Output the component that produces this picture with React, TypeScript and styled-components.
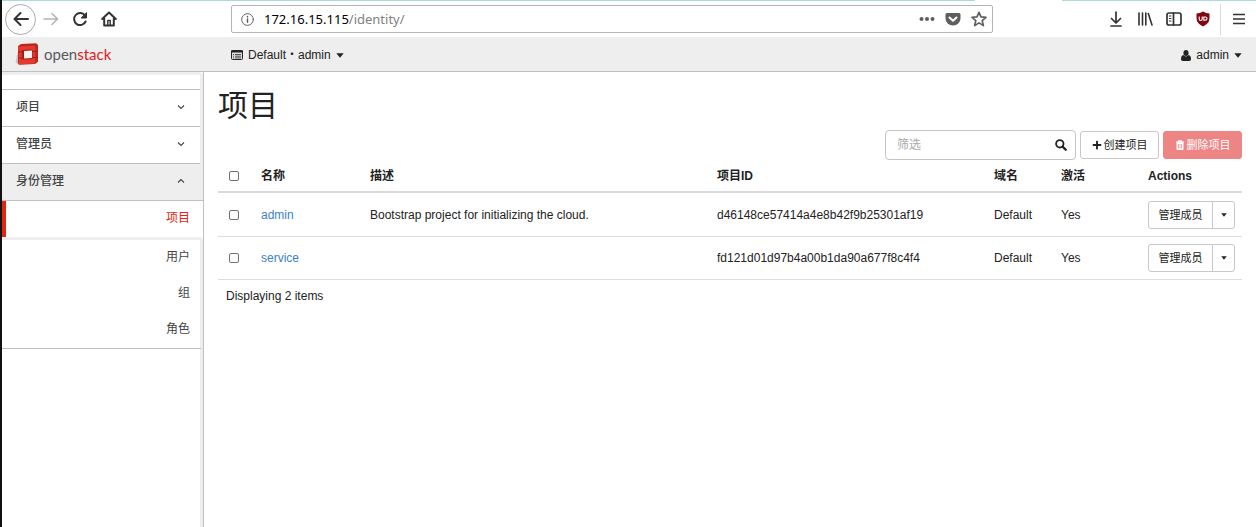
import React from "react";
import styled, { createGlobalStyle, css } from "styled-components";
import { FaPlus } from "react-icons/fa";

const sans = '"Liberation Sans", Arial, "Noto Sans CJK SC", sans-serif';
const line = "#c0c0c0";

const GlobalStyle = createGlobalStyle`
  *, *::before, *::after { box-sizing: border-box; }
  body {
    margin: 0;
    background: #fff;
    color: #222;
    font: 12px/18px ${sans};
  }
  svg { display: block; flex: none; }
  button, input { font: inherit; color: inherit; }
  a { text-decoration: none; }
`;

const Page = styled.div`
  display: flex;
  flex-direction: column;
  min-height: 100vh;
  border-left: 2px solid #111;
`;

const TabEdge = styled.div`
  display: flex;
  justify-content: space-between;
  height: 1px;
`;

const EdgeLine = styled.span<{ $width: string }>`
  width: ${(p) => p.$width};
  background: #abd9d8;
`;

const BrowserBar = styled.div`
  display: flex;
  align-items: center;
  height: 36px;
  color: #333;
`;

const NavGroup = styled.div`
  display: flex;
  align-items: center;
  flex: none;
  width: 229px;
  padding-left: 3px;
`;

const ToolButton = styled.button<{ $round?: boolean; $faded?: boolean }>`
  display: flex;
  align-items: center;
  justify-content: center;
  width: 29px;
  height: 30px;
  padding: 0;
  border: 0;
  background: none;
  color: ${(p) => (p.$faded ? "#b4b4b4" : "#333")};
  ${(p) =>
    p.$round &&
    css`
      width: 31px;
      height: 31px;
      border: 1px solid #aaa;
      border-radius: 50%;
    `}
`;

const AddressBar = styled.div`
  display: flex;
  align-items: center;
  flex: 1;
  gap: 10px;
  height: 28px;
  padding: 0 5px 0 9px;
  border: 1px solid #b5b5b5;
  border-radius: 2px;
  color: #5e5e5e;
`;

const Address = styled.div`
  flex: 1;
  font: 13px/20px "Noto Sans", "Open Sans", sans-serif;
  color: #808080;
  white-space: nowrap;

  b {
    font-weight: 400;
    color: #000;
  }
`;

const AddressTools = styled.div`
  display: flex;
  align-items: center;
  gap: 10px;
`;

const ToolGroup = styled.div`
  display: flex;
  align-items: center;
  justify-content: flex-end;
  flex: none;
  width: 263px;
  padding-right: 3px;
`;

const Divider = styled.span`
  width: 1px;
  height: 31px;
  margin: 0 3px;
  background: #d9d6e8;
`;

const Header = styled.header`
  display: flex;
  align-items: center;
  height: 35px;
  padding: 0 14px 0 13px;
  background: #eee;
  border-bottom: 1px solid ${line};
`;

const Brand = styled.a`
  display: flex;
  align-items: center;
  gap: 5px;
  width: 216px;
  font: 15px/24px Lato, sans-serif;
  color: #58585b;

  span { color: #e02020; }
`;

const MenuButton = styled.button<{ $end?: boolean }>`
  display: flex;
  align-items: center;
  gap: 5px;
  padding: 2px 0 0;
  margin-left: ${(p) => (p.$end ? "auto" : "0")};
  border: 0;
  background: none;
`;

const Body = styled.div`
  display: flex;
  flex: 1;
`;

const Sidebar = styled.nav`
  display: flex;
  flex-direction: column;
  flex: none;
  width: 202px;
  border-right: 1px solid ${line};
  color: #444;
`;

const Inset = styled.div<{ $topEdge?: boolean }>`
  flex: none;
  border-right: 3px solid #eee;
  border-top: ${(p) => (p.$topEdge ? "3px solid #eee" : "0")};
  border-top-right-radius: ${(p) => (p.$topEdge ? "4px" : "0")};
`;

const SidebarTop = styled.div`
  height: 15px;
  border-bottom: 1px solid ${line};
`;

const Section = styled.button<{ $open?: boolean }>`
  display: flex;
  align-items: center;
  justify-content: space-between;
  flex: none;
  width: 100%;
  height: 37px;
  padding: 0 ${(p) => (p.$open ? "18px" : "15px")} 2px 14px;
  border: 0;
  border-bottom: 1px solid ${line};
  background: ${(p) => (p.$open ? "#eee" : "none")};
  font-weight: 500;
  text-align: left;
`;

const SubLink = styled.a<{ $active?: boolean }>`
  display: block;
  flex: none;
  height: 36px;
  padding-right: ${(p) => (p.$active ? "13px" : "10px")};
  line-height: 34px;
  text-align: right;
  color: ${(p) => (p.$active ? "#e42313" : "#444")};
  border-left: 4px solid ${(p) => (p.$active ? "#e42313" : "transparent")};
`;

const SubLinks = styled(Inset)`
  border-bottom: 1px solid ${line};
`;

const Rest = styled(Inset)`
  flex: 1;
`;

const Main = styled.main`
  flex: 1;
  min-width: 0;
  padding: 14px 14px 24px;
`;

const Title = styled.h1`
  margin: 0;
  font-size: 30px;
  line-height: 40px;
  font-weight: 400;
`;

const Toolbar = styled.form`
  display: flex;
  align-items: center;
  justify-content: flex-end;
  gap: 4px;
  height: 30px;
  margin-top: 4px;
`;

const Filter = styled.label`
  display: flex;
  align-items: center;
  width: 191px;
  height: 30px;
  padding: 0 8px 0 11px;
  border: 1px solid #c4c4c4;
  border-radius: 4px;

  input {
    flex: 1;
    min-width: 0;
    padding: 0;
    border: 0;
    outline: 0;
    background: none;
  }
  input::placeholder { color: #aaa; }
`;

const Button = styled.button<{ $danger?: boolean }>`
  display: flex;
  align-items: center;
  justify-content: center;
  gap: 2px;
  width: 79px;
  height: 28px;
  padding: 0;
  border: 1px solid ${(p) => (p.$danger ? "#ee8585" : "#c8c8c8")};
  border-radius: 3px;
  background: ${(p) => (p.$danger ? "#ee8585" : "#fff")};
  color: ${(p) => (p.$danger ? "#fff" : "#222")};
  font-size: 11px;
`;

const Table = styled.table`
  width: 100%;
  border-collapse: separate;
  border-spacing: 0;
  table-layout: fixed;

  th, td {
    padding: 0 8px;
    text-align: left;
    vertical-align: middle;
    white-space: nowrap;
  }
  th {
    height: 33px;
    border-bottom: 2px solid #d9d9d9;
  }
  td {
    height: 43px;
    border-bottom: 1px solid #ddd;
  }
  tr:first-child td { height: 44px; }
  tfoot tr:first-child td {
    height: 32px;
    border: 0;
  }
  a { color: #3b7fcb; }
`;

const Col = styled.col<{ $width: number }>`
  width: ${(p) => p.$width}px;
`;

const Check = styled.input.attrs({ type: "checkbox" })`
  appearance: none;
  display: block;
  width: 10px;
  height: 10px;
  margin: 0 0 0 3px;
  border: 1px solid #707070;
  border-radius: 2px;
  background: #fff;
`;

const SplitButton = styled.div`
  display: flex;
  width: 87px;
  height: 28px;
  border: 1px solid #c8c8c8;
  border-radius: 3px;

  button {
    display: flex;
    align-items: center;
    justify-content: center;
    padding: 0;
    border: 0;
    background: none;
    font-size: 11px;
  }
  button:first-child { flex: 1; }
  button:last-child {
    width: 22px;
    border-left: 1px solid #c8c8c8;
  }
`;

type StrokeProps = { size?: number; width?: number; children: React.ReactNode };

const Stroke = ({ size = 16, width = 2, children }: StrokeProps) => (
  <svg width={size} height={size} viewBox="0 0 16 16" fill="none" stroke="currentColor" strokeWidth={width} strokeLinecap="round" strokeLinejoin="round" aria-hidden="true">
    {children}
  </svg>
);

const Chevron = ({ up }: { up?: boolean }) => (
  <svg width="8" height="6" viewBox="0 0 8 6" fill="none" stroke="currentColor" strokeWidth="1.1" aria-hidden="true">
    <path d={up ? "M1 4.5 4 1.5 7 4.5" : "M1 1.5 4 4.5 7 1.5"} />
  </svg>
);

const Caret = ({ small }: { small?: boolean }) => (
  <svg width={small ? 6 : 8} height={small ? 4 : 5} viewBox="0 0 8 5" aria-hidden="true">
    <path d="M.3 .3H7.700L4 4.700Z" fill="#222" />
  </svg>
);

const Logo = () => (
  <svg width="24" height="24" viewBox="0 0 24 24" aria-hidden="true">
    <path d="M.5 20 4 5 19 22 4 23.300Z" fill="#a9a4a4" opacity=".6" />
    <path d="M3 4 6 2 21 1.200 23 3V19.500L20 22 4 22.500 3 21Z" fill="#b7271e" />
    <path d="M3 4.500 20 3.500V21.500L4 22.500Z" fill="#e5392e" />
    <path d="M20 3.500 23 3V19.500L20 21.500Z" fill="#c4281f" />
    <path d="M7 8 17.500 7.500V17L7 17.500Z" fill="#a01f19" />
    <path d="M9 9 17 8.500V16L9 16.500Z" fill="#f8f2f2" />
    <path d="M3 10H7M3 16H7M17.500 9.500H23M17.500 15.500H23" stroke="#9c201a" strokeWidth="1" />
  </svg>
);

const ListIcon = () => (
  <svg width="12" height="10" viewBox="0 0 12 10" aria-hidden="true">
    <rect x=".5" y=".5" width="11" height="9" rx="1" fill="#ddd" stroke="#222" />
    <path d="M0 1.500H12" stroke="#222" strokeWidth="2" />
    <path d="M2 4.500H3M4 4.500H10M2 6.200H3M4 6.200H10M2 7.900H3M4 7.900H10" stroke="#444" strokeWidth=".9" />
  </svg>
);

const UserIcon = () => (
  <svg width="10" height="11" viewBox="0 0 10 11" fill="#222" aria-hidden="true">
    <ellipse cx="5" cy="3" rx="2.600" ry="3" />
    <path d="M2.400 5Q5 7.800 7.600 5 10 5.500 10 9.200 10 11 8.300 11H1.700Q0 11 0 9.200 0 5.500 2.400 5Z" />
  </svg>
);

const SearchIcon = () => (
  <svg width="12" height="12" viewBox="0 0 12 12" fill="none" stroke="#222" aria-hidden="true">
    <circle cx="4.8" cy="4.8" r="3.7" strokeWidth="1.8" />
    <path d="M7.6 7.6 10.8 10.8" strokeWidth="2.2" strokeLinecap="round" />
  </svg>
);

const TrashIcon = () => (
  <svg width="10" height="10" viewBox="0 0 10 10" aria-hidden="true">
    <path d="M1 2.2H9M3.5 2V.8H6.5V2" fill="none" stroke="#fff" strokeWidth="1.2" />
    <path d="M1.5 2.5H8.5V9.2Q8.5 10 7.7 10H2.3Q1.5 10 1.5 9.2Z" fill="#fff" />
    <path d="M3.5 4V8.5M5 4V8.5M6.5 4V8.5" stroke="#ee8585" strokeWidth=".7" />
  </svg>
);

const projects = [
  { name: "admin", description: "Bootstrap project for initializing the cloud.", id: "d46148ce57414a4e8b42f9b25301af19" },
  { name: "service", description: "", id: "fd121d01d97b4a00b1da90a677f8c4f4" },
];

export default function App() {
  return (
    <Page>
      <GlobalStyle />
      <TabEdge>
        <EdgeLine $width="77.6%" />
        <EdgeLine $width="15.5%" />
      </TabEdge>
      <BrowserBar>
        <NavGroup>
          <ToolButton $round aria-label="Back">
            <Stroke><path d="M15 8H2M7.5 2 1.5 8 7.5 14" /></Stroke>
          </ToolButton>
          <ToolButton $faded aria-label="Forward">
            <Stroke width={1.6}><path d="M1 8H14M9 2.5 14.5 8 9 13.5" /></Stroke>
          </ToolButton>
          <ToolButton aria-label="Reload">
            <Stroke>
              <path d="M13 4.6A6 6 0 1 0 13.6 10.5" />
              <path d="M14.5 2V7H9.5Z" fill="currentColor" strokeWidth="1" />
            </Stroke>
          </ToolButton>
          <ToolButton aria-label="Home">
            <Stroke>
              <path d="M1.2 8 8 1.5 14.8 8M3.2 7.5V14.5H12.8V7.5" />
              <path d="M6.8 14V9.5H9.2V14" strokeWidth="1.4" />
            </Stroke>
          </ToolButton>
        </NavGroup>
        <AddressBar>
          <Stroke size={13} width={1.2}>
            <circle cx="8" cy="8" r="7.2" />
            <path d="M8 7.5V11.5M8 4.4V4.8" strokeWidth="1.8" />
          </Stroke>
          <Address><b>172.16.15.115</b>/identity/</Address>
          <AddressTools>
            <svg width="16" height="16" viewBox="0 0 16 16" fill="currentColor" aria-hidden="true">
              <circle cx="2.5" cy="8" r="2" /><circle cx="8" cy="8" r="2" /><circle cx="13.5" cy="8" r="2" />
            </svg>
            <svg width="16" height="16" viewBox="0 0 16 16" aria-hidden="true">
              <path d="M2 2H14Q15.500 2 15.500 3.500V7.500A7.500 7 0 0 1 .5 7.500V3.500Q.5 2 2 2Z" fill="#5e5e5e" />
              <path d="M4.500 6.500 8 9.800 11.500 6.500" fill="none" stroke="#fff" strokeWidth="2" strokeLinecap="round" strokeLinejoin="round" />
            </svg>
            <Stroke width={1.7}>
              <path d="M8 1.300 10 5.900 15 6.300 11.200 9.600 12.400 14.600 8 11.900 3.600 14.600 4.800 9.600 1 6.300 6 5.900Z" />
            </Stroke>
          </AddressTools>
        </AddressBar>
        <ToolGroup>
          <ToolButton aria-label="Downloads">
            <Stroke width={1.7}><path d="M8 1V11.500M3.500 7.500 8 12 12.500 7.500M3 15H13" /></Stroke>
          </ToolButton>
          <ToolButton aria-label="Library">
            <Stroke width={1.6}><path d="M2 2V14M5.500 2V14M8.800 2V14M11.300 2.500 15 14" /></Stroke>
          </ToolButton>
          <ToolButton aria-label="Sidebars">
            <Stroke width={1.7}>
              <rect x="1" y="2" width="14" height="12" rx="2" />
              <path d="M7.500 2V14" />
              <path d="M3.300 5H5M3.300 7.500H5M3.300 10H5" strokeWidth="1" />
            </Stroke>
          </ToolButton>
          <ToolButton aria-label="uBlock">
            <svg width="14" height="16" viewBox="0 0 14 16" aria-hidden="true">
              <path d="M7 .5Q10 2.500 13.500 2.500V7Q13.500 12.500 7 15.500 .5 12.500 .5 7V2.500Q4 2.500 7 .5Z" fill="#800610" />
              <path d="M3.200 5.500V8Q3.200 9.500 4.700 9.500T6.200 8V5.500" fill="none" stroke="#fff" strokeWidth="1.1" />
              <path d="M7.800 6V9.300H9Q11 9.300 11 7.600T9 6Z" fill="none" stroke="#fff" strokeWidth="1.1" />
            </svg>
          </ToolButton>
          <Divider />
          <ToolButton aria-label="Menu">
            <svg width="12" height="12" viewBox="0 0 12 12" stroke="#333" strokeWidth="1.5" aria-hidden="true">
              <path d="M0 1.500H12M0 6H12M0 10.500H12" />
            </svg>
          </ToolButton>
        </ToolGroup>
      </BrowserBar>

      <Header>
        <Brand href="#"><Logo /><div>open<span>stack</span></div></Brand>
        <MenuButton><ListIcon />Default・admin <Caret /></MenuButton>
        <MenuButton $end><UserIcon />admin <Caret /></MenuButton>
      </Header>

      <Body>
        <Sidebar>
          <Inset $topEdge>
            <SidebarTop />
            <Section>项目 <Chevron /></Section>
            <Section>管理员 <Chevron /></Section>
          </Inset>
          <Section $open>身份管理 <Chevron up /></Section>
          <SubLink $active href="#">项目</SubLink>
          <SubLinks $topEdge>
            <SubLink href="#">用户</SubLink>
            <SubLink href="#">组</SubLink>
            <SubLink href="#">角色</SubLink>
          </SubLinks>
          <Rest />
        </Sidebar>

        <Main>
          <Title>项目</Title>
          <Toolbar onSubmit={(e) => e.preventDefault()}>
            <Filter>
              <input placeholder="筛选" aria-label="筛选" />
              <SearchIcon />
            </Filter>
            <Button type="button"><FaPlus size={10} />创建项目</Button>
            <Button type="button" $danger><TrashIcon />删除项目</Button>
          </Toolbar>
          <Table>
            <colgroup>
              <Col $width={35} />
              <Col $width={109} />
              <col />
              <Col $width={277} />
              <Col $width={67} />
              <Col $width={87} />
              <Col $width={102} />
            </colgroup>
            <thead>
              <tr>
                <th><Check aria-label="全选" /></th>
                <th>名称</th>
                <th>描述</th>
                <th>项目ID</th>
                <th>域名</th>
                <th>激活</th>
                <th>Actions</th>
              </tr>
            </thead>
            <tbody>
              {projects.map((p) => (
                <tr key={p.id}>
                  <td><Check aria-label={p.name} /></td>
                  <td><a href="#">{p.name}</a></td>
                  <td>{p.description}</td>
                  <td>{p.id}</td>
                  <td>Default</td>
                  <td>Yes</td>
                  <td>
                    <SplitButton>
                      <button>管理成员</button>
                      <button aria-label="更多"><Caret small /></button>
                    </SplitButton>
                  </td>
                </tr>
              ))}
            </tbody>
            <tfoot>
              <tr><td colSpan={7}>Displaying 2 items</td></tr>
            </tfoot>
          </Table>
        </Main>
      </Body>
    </Page>
  );
}
